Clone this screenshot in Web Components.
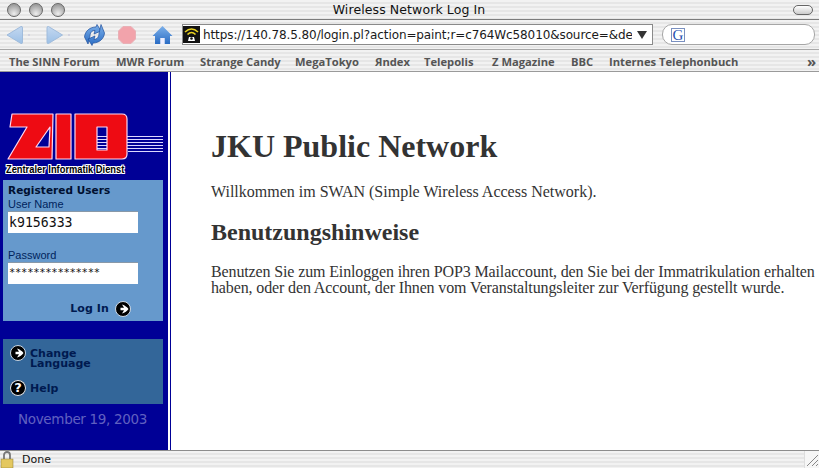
<!DOCTYPE html>
<html><head><meta charset="utf-8"><style>
html,body{margin:0;padding:0;width:819px;height:468px;overflow:hidden;background:#fff}
browser-window{font-family:"Liberation Sans",sans-serif}
</style></head><body>
<browser-window>
<title-bar>Wireless Network Log In</title-bar>
<nav-toolbar url="https://140.78.5.80/login.pl?action=paint;r=c764Wc58010&amp;source=&amp;de"></nav-toolbar>
<bookmark-bar>
<b-mark w="107">The SINN Forum</b-mark><b-mark w="84">MWR Forum</b-mark><b-mark w="95">Strange Candy</b-mark><b-mark w="80">MegaTokyo</b-mark><b-mark w="49">Яndex</b-mark><b-mark w="68">Telepolis</b-mark><b-mark w="79">Z Magazine</b-mark><b-mark w="38">BBC</b-mark><b-mark w="198">Internes Telephonbuch</b-mark><b-mark w="12" style="font-size:15px;line-height:12px">»</b-mark>
</bookmark-bar>
<main-area>
<side-bar slot="side">
<zid-logo></zid-logo>
<login-panel></login-panel>
<link-panel></link-panel>
<date-line>November 19, 2003</date-line>
</side-bar>
<page-content>
<h1>JKU Public Network</h1>
<p>Willkommen im SWAN (Simple Wireless Access Network).</p>
<h2>Benutzungshinweise</h2>
<p class="n">Benutzen Sie zum Einloggen ihren POP3 Mailaccount, den Sie bei der Immatrikulation erhalten<br>haben, oder den Account, der Ihnen vom Veranstaltungsleiter zur Verfügung gestellt wurde.</p>
</page-content>
</main-area>
<status-bar>Done</status-bar>
</browser-window>
<script>
const PIN='repeating-linear-gradient(#f2f2f2 0 2px,#e6e6e6 2px 4px)';
function def(name,html){
  customElements.define(name,class extends HTMLElement{
    connectedCallback(){
      if(this.shadowRoot)return;
      const r=this.attachShadow({mode:'open'});
      r.innerHTML=typeof html==='function'?html(this):html;
    }
  });
}
def('browser-window',`<style>:host{display:flex;flex-direction:column;width:819px;height:468px;overflow:hidden}</style><slot></slot>`);
def('title-bar',`<style>
:host{display:flex;align-items:center;height:20px;box-sizing:border-box;background:${PIN};border-bottom:1px solid #7c7c7c;position:relative;flex:none}
.l{display:flex;gap:8px;padding-left:7px;position:absolute;left:0;top:3px}
.d{width:14px;height:14px;border-radius:50%;box-sizing:border-box;border:1.5px solid #666;background:radial-gradient(circle at 50% 80%,#eee,#a0a0a0 75%)}
.t{flex:1;text-align:center;font:12.5px "DejaVu Sans",sans-serif;color:#111;letter-spacing:.1px;padding-right:1px;line-height:19px}
.p{position:absolute;right:6px;top:5px;width:20px;height:10px;border-radius:5px;border:1.5px solid #666;box-sizing:border-box;background:linear-gradient(#fff,#ccc)}
</style><div class="l"><div class="d"></div><div class="d"></div><div class="d"></div></div><div class="t"><slot></slot></div><div class="p"></div>`);
def('nav-toolbar',h=>`<style>
:host{display:flex;align-items:center;height:30px;box-sizing:border-box;background:${PIN};border-bottom:1px solid #a8a8a8;padding-left:6px;flex:none}
svg{display:block;flex:none}
.u{width:471px;height:21px;box-sizing:border-box;background:#fff;border:1px solid #8a8a8a;display:flex;align-items:center;font:12px "DejaVu Sans",sans-serif;color:#1a1a1a;overflow:hidden}
.u .tx{width:429px;overflow:hidden;white-space:nowrap;margin-left:3px;letter-spacing:-.1px}
.g{margin-left:9px;width:153px;height:21px;box-sizing:border-box;background:#fff;border:1px solid #a6a6a6;border-radius:10px;display:flex;align-items:center;padding-left:8px}
.gi{width:14px;height:14px;box-sizing:border-box;border:1px solid #7a90c0;font:15px/13px "Liberation Serif",serif;color:#2a50b0;text-align:center;overflow:hidden}
</style>
<svg width="26" height="20" viewBox="0 0 26 20"><defs><linearGradient id="b" x1="0" y1="0" x2="0" y2="1"><stop offset="0" stop-color="#c4d8f0"/><stop offset="1" stop-color="#9cc0e6"/></linearGradient><linearGradient id="h" x1="0" y1="0" x2="0" y2="1"><stop offset="0" stop-color="#7cb0ea"/><stop offset="1" stop-color="#2a6cc4"/></linearGradient></defs><path d="M1 10 15 1.500Q16.500 1 16.500 3V17Q16.500 19 15 18.500Z" fill="url(#b)" stroke="#a0bcdc"/><circle cx="23" cy="10" r="1" fill="#ccd"/></svg>
<svg style="margin-left:14px" width="26" height="20" viewBox="0 0 26 20"><path d="M16.500 10 2.500 1.500Q1 1 1 3V17Q1 19 2.500 18.500Z" fill="url(#b)" stroke="#a0bcdc"/><circle cx="23" cy="10" r="1" fill="#ccd"/></svg>
<svg style="margin-left:11px" width="23" height="22" viewBox="0 0 23 22"><path d="M1.500 13C2 7 7 3 13 3l1-2.500 4 6.500-7 3 1-3.500C9 6 7 9 7 12L5 20Z" fill="url(#h)" stroke="#1e4f9c" stroke-width=".7"/><path d="M21.500 9c-.5 6-5.500 10-11.500 10l-1 2.500-4-6.500 7-3-1 3.500c3 0 5-3 5-6l2-9Z" fill="url(#h)" stroke="#1e4f9c" stroke-width=".7"/></svg>
<svg style="margin-left:11px" width="20" height="20" viewBox="0 0 20 20"><path d="M6 1.500h8L18.500 6v8L14 18.500H6L1.500 14V6Z" fill="#f2a3ab" stroke="#e8b0b6"/></svg>
<svg style="margin-left:15px" width="21" height="20" viewBox="0 0 21 20"><path d="M10.500 1 20.500 11 18 11V19H12.500V13H8.500V19H3V11L.5 11Z" fill="url(#h)"/><path d="M8.500 13h4v6h-4z" fill="#eef"/></svg>
<div class="u" style="margin-left:9px"><svg width="17" height="17" viewBox="0 0 17 17"><rect width="17" height="17" fill="#111"/><path d="M2 6Q8.500 0 15 6" stroke="#e8d020" stroke-width="1.600" fill="none"/><path d="M4.500 8.500Q8.500 4.500 12.500 8.500" stroke="#e8d020" stroke-width="1.600" fill="none"/><path d="M5 15l1-4h5l1 4z" fill="#fff"/><circle cx="8.500" cy="12.500" r="1.300" fill="#111"/></svg><div class="tx">${h.getAttribute('url').replace(/&/g,'&amp;')}</div><svg style="margin-left:4px" width="12" height="10" viewBox="0 0 12 10"><path d="M1 1h10L6 9Z" fill="#333"/></svg></div>
<div class="g"><div class="gi">G</div></div>`);
def('bookmark-bar',`<style>:host{display:flex;align-items:center;height:22px;box-sizing:border-box;background:${PIN};border-bottom:1px solid #9a9a9a;padding:1px 0 0 9px;flex:none}</style><slot></slot>`);
def('b-mark',h=>`<style>:host{display:block;flex:none;width:${h.getAttribute('w')}px;font:bold 11.2px "Open Sans",sans-serif;color:#555;white-space:nowrap}</style><slot></slot>`);
def('main-area',`<style>:host{display:flex;flex:1;min-height:0;background:#fff}</style><slot name="side"></slot><slot></slot>`);
def('side-bar',`<style>:host{display:flex;flex-direction:column;flex:none;width:168px;box-sizing:border-box;background:#000096;padding:0 5px 0 3px;margin-right:2px}</style><slot></slot>`);
def('zid-logo',`<style>:host{display:block;height:108px;position:relative}
svg{position:absolute;left:-3px;top:0}
.t{position:absolute;left:3px;top:91px;font:bold 10.500px "Liberation Sans",sans-serif;color:#000;white-space:nowrap;transform:scaleX(.885);transform-origin:left center;text-shadow:1px 0 #fff,-1px 0 #fff,0 1px #fff,0 -1px #fff,1px 1px #fff,-1px -1px #fff,1px -1px #fff,-1px 1px #fff}
</style>
<svg width="168" height="108" viewBox="0 72 168 108"><g fill="#dcd8ff"><rect x="97" y="136" width="66" height="1"/><rect x="97" y="139" width="66" height="1"/><rect x="97" y="142" width="66" height="1"/><rect x="97" y="145" width="66" height="1"/><rect x="97" y="148" width="66" height="1"/><rect x="128" y="151" width="35" height="1"/></g>
<g stroke="#ffd8f0" stroke-width="1.200" fill="#ee0b13" fill-rule="evenodd" stroke-linejoin="round"><path d="M12 114H53L52 159H8L27 127H10ZM50 127 36 147H49Z"/><path d="M56 114H71V159H56Z"/><path d="M75 114H122Q127 114 127 119V154Q127 159 122 159H75ZM97 127V150H107V127Z"/></g></svg>
<div class="t">Zentraler Informatik Dienst</div>`);
def('login-panel',`<style>:host{display:block;height:141px;background:#6699cc;box-sizing:border-box;padding:4px 5px 0}
.h{font:bold 10.500px "DejaVu Sans",sans-serif;color:#001030;line-height:12px;letter-spacing:.05px}
label{display:block;font:11px/12px "Liberation Sans",sans-serif;color:#00245c}
.f{width:130px;height:21px;background:#fff;box-shadow:0 -1px 0 #8898a8;box-sizing:border-box;font:13.200px/22px "DejaVu Sans Mono",monospace;color:#111;padding-left:1px;overflow:hidden;white-space:nowrap}
.s{font:bold 11px/12px "DejaVu Sans",sans-serif;color:#001a50;display:flex;align-items:center;justify-content:flex-end;gap:6px;padding-right:27px;letter-spacing:.1px}
</style>
<div class="h">Registered Users</div>
<label style="margin-top:2px">User Name</label>
<div class="f" style="margin-top:2px">k9156333</div>
<label style="margin-top:16px">Password</label>
<div class="f" style="margin-top:2px;font-size:10.500px;line-height:18px;letter-spacing:-.27px">***************</div>
<div class="s" style="margin-top:17px">Log In <round-go></round-go></div>`);
def('round-go',`<style>:host{display:block;width:16px;height:16px;flex:none}svg{display:block}</style>
<svg width="16" height="16" viewBox="0 0 16 16"><circle cx="8" cy="8" r="7.500" fill="#000" stroke="#dfe8f2" stroke-width=".9"/><path d="M7 3.500C10 4.500 12 6 13.500 8 12 10 10 11.500 7 12.500L9 9.200H5.500V6.800H9Z" fill="#fff"/></svg>`);
def('link-panel',`<style>:host{display:flex;flex-direction:column;height:65px;margin-top:18px;background:#336699;box-sizing:border-box;padding:6px 0 0 7px}
.r{display:flex;gap:4px;font:bold 11px/10px "DejaVu Sans",sans-serif;color:#001a50}
.x{padding-top:4px}
.q{width:16px;height:16px;border-radius:50%;background:#000;box-shadow:0 0 0 1px #dfe8f2 inset;color:#fff;font:bold 13px/16px "DejaVu Sans",sans-serif;text-align:center;flex:none}
</style>
<div class="r"><round-go></round-go><div class="x">Change<br>Language</div></div>
<div class="r" style="margin-top:11px"><div class="q">?</div><div class="x" style="padding-top:4px">Help</div></div>`);
def('date-line',`<style>:host{display:block;margin-top:7px;padding-left:15px;font:13.500px/16px "DejaVu Sans",sans-serif;color:#6060c0;letter-spacing:-.33px;white-space:nowrap}</style><slot></slot>`);
def('page-content',`<style>:host{display:block;flex:1;min-width:0;border-left:1px solid #000096;padding:56px 0 0 40px;font:16px/16px "Liberation Serif",serif;color:#333}
::slotted(h1){font:bold 32px/37px "Liberation Serif",serif;margin:0 0 19px}
::slotted(h2){font:bold 24px/28px "Liberation Serif",serif;margin:18px 0 18px}
::slotted(p){margin:0;white-space:nowrap}
::slotted(p.n){letter-spacing:-.13px}
</style><slot></slot>`);
def('status-bar',`<style>:host{display:flex;align-items:center;height:18px;box-sizing:border-box;border-top:1px solid #8c8c8c;background:${PIN};flex:none;position:relative;font:11px "DejaVu Sans",sans-serif;color:#111}
.t{margin-left:8px}
.c{position:absolute;right:0;top:0;width:14px;height:17px;background:#f6f6f6;border-left:1px solid #ddd}
.c svg{display:block}
</style>
<svg width="14" height="17" viewBox="0 0 14 17" style="flex:none"><path d="M4 8V4a3 3 0 0 1 6 0v4" fill="none" stroke="#777" stroke-width="1.800"/><rect x="1" y="8" width="12" height="9" fill="#e4c860" stroke="#8a7a30" stroke-width=".5"/></svg>
<div class="t"><slot></slot></div><div class="c"><svg width="14" height="17" viewBox="0 0 14 17"><path d="M2 15 13 4M7 15l6-6M11 15l2-2" stroke="#888"/></svg></div>`);
</script>
</body></html>
